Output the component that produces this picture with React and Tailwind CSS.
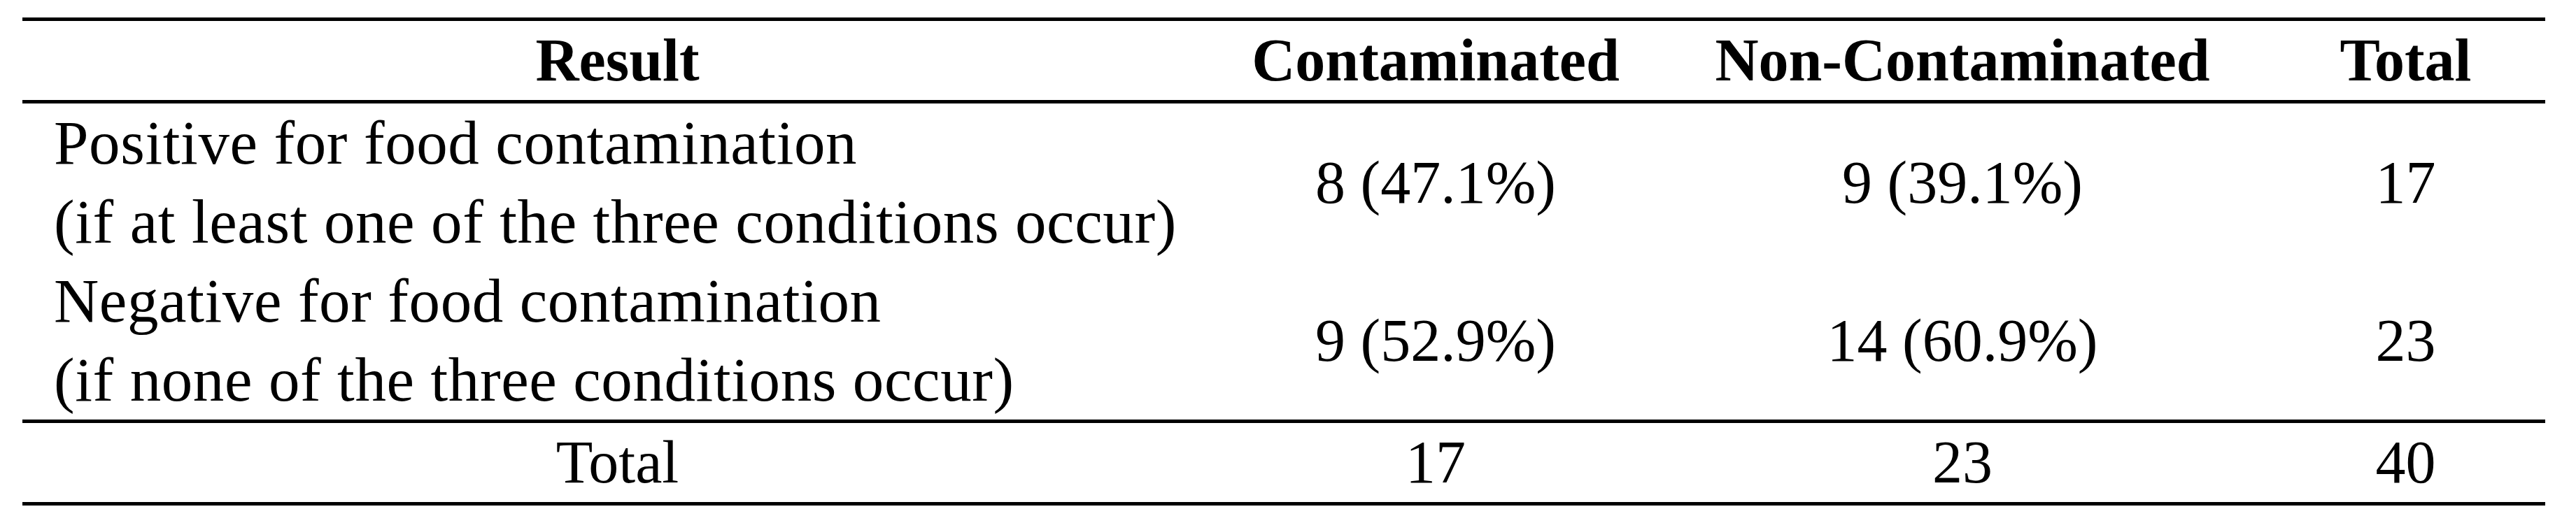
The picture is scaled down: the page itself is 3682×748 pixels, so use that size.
const rows = [
  {
    label: ["Positive for food contamination", "(if at least one of the three conditions occur)"],
    cont: "8 (47.1%)",
    non: "9 (39.1%)",
    total: "17",
    h: "h-[223px]",
  },
  {
    label: ["Negative for food contamination", "(if none of the three conditions occur)"],
    cont: "9 (52.9%)",
    non: "14 (60.9%)",
    total: "23",
    h: "h-[224px]",
  },
];

export default function App() {
  return (
    <div className="w-[3682px] h-[748px] bg-white pt-[25px] pl-[32px] font-['Liberation_Serif',serif] text-[86px] leading-[113px] text-black">
      <table className="table-fixed border-collapse w-[3606px]">
        <colgroup>
          <col className="w-[1701px]" />
          <col className="w-[638px]" />
          <col className="w-[868px]" />
          <col className="w-[399px]" />
        </colgroup>
        <thead>
          <tr className="h-[114px] border-t-[5px] border-b-[5px] border-black font-bold">
            <th className="p-0 text-center">Result</th>
            <th className="p-0 text-center">Contaminated</th>
            <th className="p-0 text-center">Non-Contaminated</th>
            <th className="p-0 text-center">Total</th>
          </tr>
        </thead>
        <tbody>
          {rows.map((r) => (
            <tr key={r.total} className={r.h}>
              <td className="p-0 pl-[45px] text-left align-middle text-[89px] tracking-[0.6px]">
                <div>{r.label[0]}</div>
                <div>{r.label[1]}</div>
              </td>
              <td className="p-0 text-center align-middle">{r.cont}</td>
              <td className="p-0 text-center align-middle">{r.non}</td>
              <td className="p-0 text-center align-middle">{r.total}</td>
            </tr>
          ))}
          <tr className="h-[114px] border-t-[5px] border-b-[5px] border-black">
            <td className="p-0 text-center">Total</td>
            <td className="p-0 text-center">17</td>
            <td className="p-0 text-center">23</td>
            <td className="p-0 text-center">40</td>
          </tr>
        </tbody>
      </table>
    </div>
  );
}
